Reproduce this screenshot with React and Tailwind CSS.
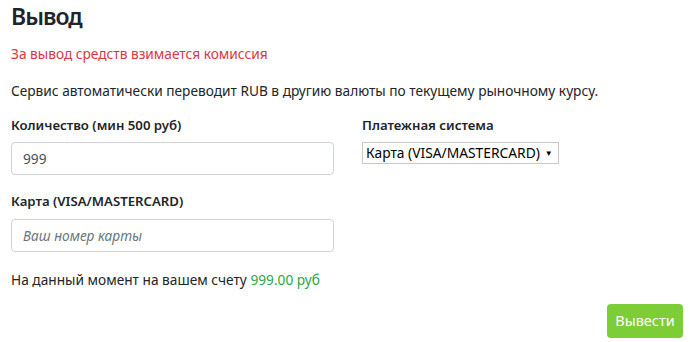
export default function App() {
  return (
    <div className="w-[690px] h-[342px] bg-white px-[11px] text-[#212529] font-['Segoe_UI','Noto_Sans',sans-serif] text-[13.7px]">
      <h1 className="pt-[2px] text-[23px] leading-[29px] font-semibold tracking-[-1px]">Вывод</h1>

      <p className="mt-[13px] leading-[20px] text-[#dc3545]">За вывод средств взимается комиссия</p>
      <p className="mt-[17px] leading-[20px]">
        Сервис автоматически переводит RUB в другию валюты по текущему рыночному курсу.
      </p>

      <div className="mt-[14px] flex">
        <div className="w-[323px]">
          <label className="block leading-[20px] text-[13.2px] font-semibold">Количество (мин 500 руб)</label>
          <input
            defaultValue="999"
            className="mt-[7px] block h-[33px] w-full rounded-[4px] border border-[#ced4da] px-[11px] text-[13.7px] text-[#495057] outline-none"
          />
          <label className="mt-[16px] block leading-[20px] text-[13.2px] font-semibold">Карта (VISA/MASTERCARD)</label>
          <input
            placeholder="Ваш номер карты"
            className="mt-[8px] block h-[33px] w-full rounded-[4px] border border-[#ced4da] px-[11px] text-[13.7px] italic placeholder:text-[#6c757d] outline-none"
          />
        </div>
        <div className="ml-[28px]">
          <label className="block leading-[20px] text-[13.2px] font-semibold">Платежная система</label>
          <div className="mt-[7px] inline-flex h-[22px] items-center gap-[5px] whitespace-nowrap border border-[#c8c8c8] pl-[3px] pr-[5px] leading-none text-[13.8px] text-black">
            <span>Карта (VISA/MASTERCARD)</span>
            <span className="text-[8px]">▼</span>
          </div>
        </div>
      </div>

      <p className="mt-[18px] leading-[20px]">
        На данный момент на вашем счету <span className="text-[#28a745]">999.00 руб</span>
      </p>

      <div className="mt-[14px] flex justify-end">
        <button className="mr-[-4px] h-[34px] w-[76px] rounded-[4px] bg-[#7dcd37] text-[14.5px] text-white">
          Вывести
        </button>
      </div>
    </div>
  );
}
